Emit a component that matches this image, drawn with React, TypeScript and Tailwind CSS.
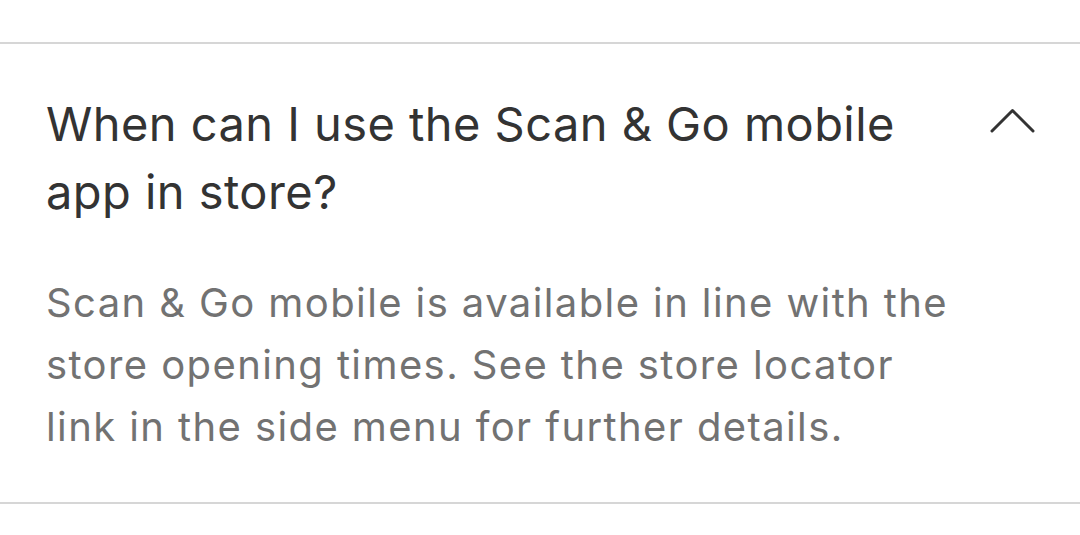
export default function App() {
  return (
    <div className="w-[1080px] h-[535px] bg-white overflow-hidden" style={{ fontFamily: "Inter, 'Noto Sans', sans-serif" }}>
      <div className="h-[42px]" />
      <div className="border-t-2 border-[#d6d6d6]" />
      <div className="pl-[46px] pr-[44px]">
        <div className="flex items-start justify-between pt-[46px]">
          <div className="text-[47px] leading-[68px] tracking-[0.45px] text-[#333333] w-[920px]">
            When can I use the Scan &amp; Go mobile app in store?
          </div>
          <svg width="48" height="28" viewBox="0 0 48 28" className="mt-[16px] shrink-0">
            <path d="M4 25 L24.5 4.5 L45 25" fill="none" stroke="#333" strokeWidth="3" strokeLinecap="round" strokeLinejoin="round" />
          </svg>
        </div>
        <div className="text-[40px] leading-[62px] tracking-[1.4px] text-[#727272] pt-[46px] pb-[44px] w-[915px]">
          Scan &amp; Go mobile is available in line with the store opening times. See the store locator link in the side menu for further details.
        </div>
      </div>
      <div className="border-t-2 border-[#d6d6d6]" />
    </div>
  );
}
